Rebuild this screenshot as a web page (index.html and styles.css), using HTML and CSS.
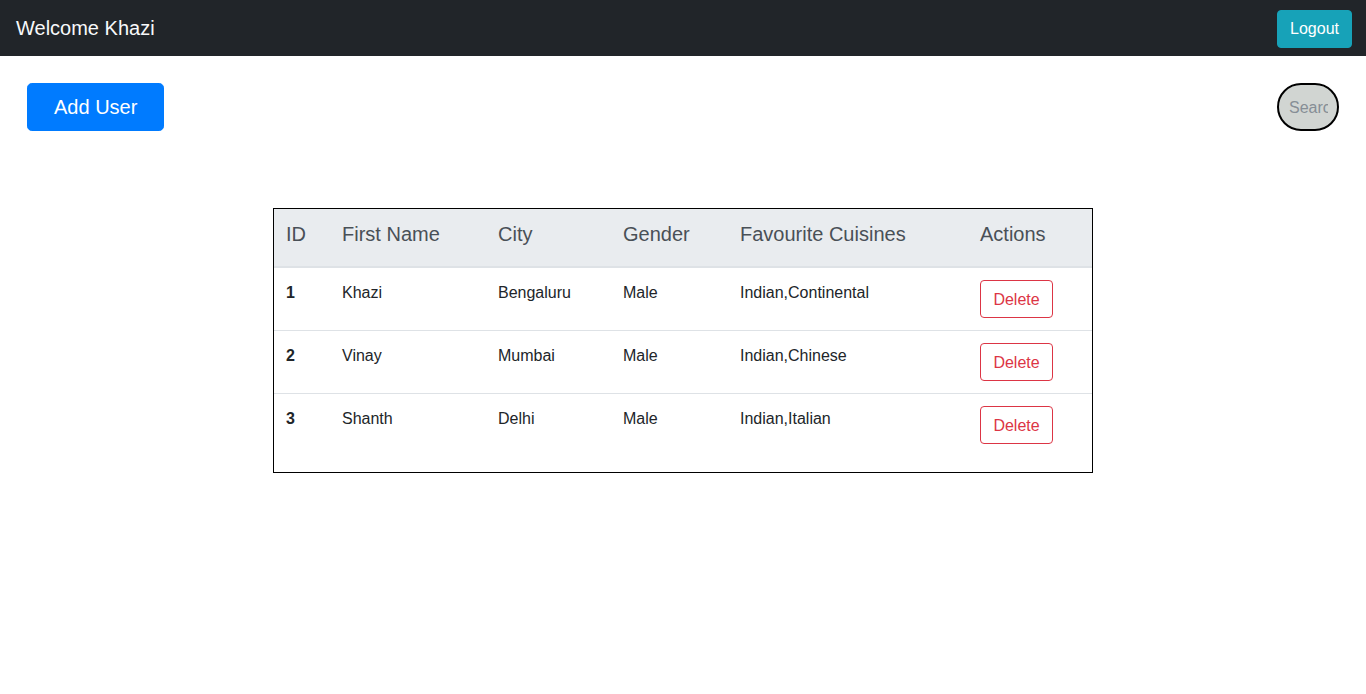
FILE: index.html
```html
<!DOCTYPE html>
<html>
<head>
<meta charset="utf-8">
<link rel="stylesheet" href="styles.css">
</head>
<body>
<nav class="navbar">
  <span class="brand">Welcome Khazi</span>
  <button class="btn btn-info">Logout</button>
</nav>
<div class="toolbar">
  <button class="btn btn-primary btn-lg">Add User</button>
  <input class="search" type="text" placeholder="Search">
</div>
<div class="table-wrap">
  <table class="table">
    <thead>
      <tr>
        <th class="c-id">ID</th>
        <th class="c-name">First Name</th>
        <th class="c-city">City</th>
        <th class="c-gender">Gender</th>
        <th class="c-cuis">Favourite Cuisines</th>
        <th class="c-act">Actions</th>
      </tr>
    </thead>
    <tbody>
      <tr>
        <td class="id">1</td><td>Khazi</td><td>Bengaluru</td><td>Male</td><td>Indian,Continental</td>
        <td class="act"><button class="btn btn-outline-danger">Delete</button></td>
      </tr>
      <tr>
        <td class="id">2</td><td>Vinay</td><td>Mumbai</td><td>Male</td><td>Indian,Chinese</td>
        <td class="act"><button class="btn btn-outline-danger">Delete</button></td>
      </tr>
      <tr>
        <td class="id">3</td><td>Shanth</td><td>Delhi</td><td>Male</td><td>Indian,Italian</td>
        <td class="act"><button class="btn btn-outline-danger">Delete</button></td>
      </tr>
    </tbody>
  </table>
</div>
</body>
</html>
```
FILE: styles.css
```css
* { box-sizing: border-box; }
body {
  margin: 0;
  font-family: "Liberation Sans", Arial, sans-serif;
  font-size: 16px;
  line-height: 1.5;
  color: #212529;
  background: #fff;
}
.navbar {
  height: 56px;
  background: #212529;
  display: flex;
  align-items: center;
  justify-content: space-between;
  padding: 0 14px 0 16px;
}
.brand {
  font-size: 20px;
  color: #f8f9fa;
  line-height: 30px;
}
.btn {
  font-family: inherit;
  font-size: 16px;
  line-height: 24px;
  padding: 6px 12px;
  border: 1px solid transparent;
  border-radius: 4px;
  cursor: pointer;
}
.btn-info {
  background: #17a2b8;
  border-color: #17a2b8;
  color: #fff;
  margin-top: 1px;
}
.btn-primary {
  background: #007bff;
  border-color: #007bff;
  color: #fff;
}
.btn-lg {
  font-size: 20px;
  line-height: 30px;
  padding: 8px 26px;
  border-radius: 4.8px;
}
.btn-outline-danger {
  background: transparent;
  border-color: #dc3545;
  color: #dc3545;
  padding: 7px 12px 5px;
  width: 73px;
}
.toolbar {
  display: flex;
  justify-content: space-between;
  align-items: flex-start;
  padding: 27px 27px 0 27px;
}
.search {
  width: 62px;
  height: 48px;
  border: 2px solid #000;
  border-radius: 24px;
  background: #d1d5d2;
  font-family: inherit;
  font-size: 16px;
  padding: 2px 9px 0 10px;
  color: #495057;
  outline: none;
}
.search::placeholder { color: #868e96; }
.table-wrap {
  width: 820px;
  margin: 77px auto 0;
  border: 1px solid #000;
}
.table {
  width: 100%;
  border-collapse: collapse;
  margin-bottom: 16px;
}
.table th, .table td {
  padding: 13px 12px 12px;
  text-align: left;
  vertical-align: top;
  border-top: 1px solid #dee2e6;
}
.table td.act { padding-top: 12px; }
.table thead th {
  font-size: 20px;
  font-weight: normal;
  line-height: 30px;
  color: #495057;
  background: #e9ecef;
  border-bottom: 2px solid #dee2e6;
  border-top: 0;
  padding: 10px 12px 17px;
}
.table td { line-height: 24px; }
.table td.id { font-weight: bold; }
.c-id { width: 56px; }
.c-name { width: 156px; }
.c-city { width: 125px; }
.c-gender { width: 117px; }
.c-cuis { width: 240px; }
.c-act { width: 124px; }
```
